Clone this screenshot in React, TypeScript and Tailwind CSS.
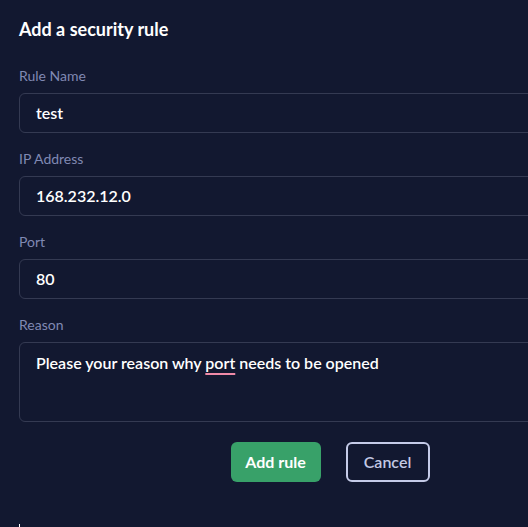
import React from "react";

export default function App() {
  const font = { fontFamily: "Lato, 'Noto Sans', sans-serif" };
  return (
    <div className="w-[528px] h-[527px] overflow-hidden bg-[#121830] text-white" style={font}>
      <div className="w-[622px] ml-[19px] pt-[17px] flex flex-col">
        <h1 className="text-[18px] font-bold leading-[24px] text-white">Add a security rule</h1>
        <label className="mt-[27px] text-[14px] leading-[16px] text-[#8089b3]">Rule Name</label>
        <div className="mt-[9px] h-[40px] rounded-[6px] border border-[#343a52] flex items-center pl-[16px] text-[16px] font-semibold text-white">test</div>
        <label className="mt-[18px] text-[14px] leading-[16px] text-[#8089b3]">IP Address</label>
        <div className="mt-[9px] h-[40px] rounded-[6px] border border-[#343a52] flex items-center pl-[16px] text-[16px] font-semibold text-white">168.232.12.0</div>
        <label className="mt-[18px] text-[14px] leading-[16px] text-[#8089b3]">Port</label>
        <div className="mt-[9px] h-[40px] rounded-[6px] border border-[#343a52] flex items-center pl-[16px] text-[16px] font-semibold text-white">80</div>
        <label className="mt-[18px] text-[14px] leading-[16px] text-[#8089b3]">Reason</label>
        <div className="mt-[9px] h-[80px] rounded-[6px] border border-[#343a52] pl-[16px] pt-[10px] text-[16px] font-semibold leading-[20px] text-white">
          Please your reason why{" "}
          <span className="underline decoration-[#f08aa8] decoration-2 underline-offset-[4px]">port</span>{" "}
          needs to be opened
        </div>
        <div className="mt-[20px] flex justify-center gap-[25px]">
          <button className="w-[90px] h-[40px] rounded-[6px] bg-[#38a169] text-white text-[16px] font-bold">Add rule</button>
          <button className="w-[84px] h-[40px] rounded-[6px] border-2 border-[#c5cbe8] text-[#c3c9e4] text-[16px] font-semibold">Cancel</button>
        </div>
        <div className="mt-[42px] w-px h-[4px] bg-white" />
      </div>
    </div>
  );
}
